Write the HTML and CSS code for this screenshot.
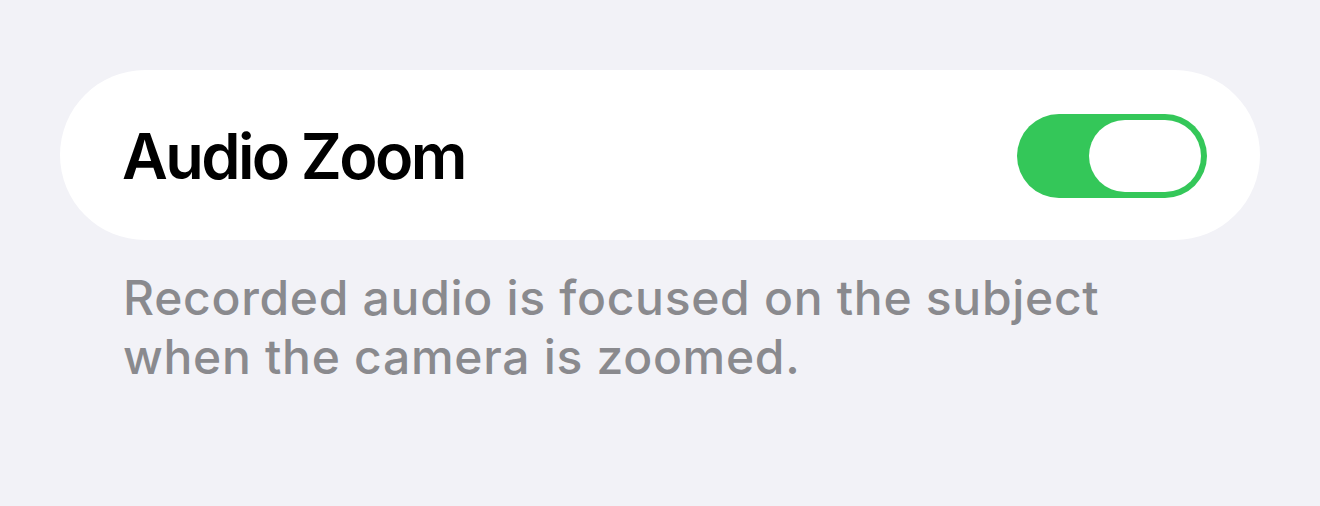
FILE: index.html
```html
<!DOCTYPE html>
<html lang="en">
<head>
  <meta charset="UTF-8">
  <meta name="viewport" content="width=device-width, initial-scale=1">
  <title>Audio Zoom</title>
  <link rel="stylesheet" href="styles.css">
</head>
<body>

<div class="group">
  <!-- setting row -->
  <div class="cell">
    <span class="cell-title">Audio Zoom</span>
    <div class="switch on">
      <div class="knob"></div>
    </div>
  </div>
  <!-- footer note under the group -->
  <p class="footer">Recorded audio is focused on the subject<br>when the camera is zoomed.</p>
</div>

</body>
</html>
```

FILE: styles.css
```css
body {
  margin: 0;
  background: #f2f2f7;
  font-family: Inter, "Noto Sans", sans-serif;
  padding: 70px 60px 0;
}
.group {
  width: 1200px;
}
.cell {
  background: #fff;
  border-radius: 85px;
  height: 170px;
  display: flex;
  align-items: center;
  justify-content: space-between;
  padding: 0 53px 0 62px;
  box-sizing: border-box;
}
.cell-title {
  font-size: 63px;
  font-weight: 600;
  color: #000;
  letter-spacing: -2.6px;
  margin-top: 1px;
}
.switch {
  width: 190px;
  height: 84px;
  border-radius: 42px;
  background: #34c759;
  display: flex;
  align-items: center;
  justify-content: flex-end;
  padding: 0 6px;
  box-sizing: border-box;
  margin-top: 2px;
}
.knob {
  width: 112px;
  height: 72px;
  border-radius: 36px;
  background: #fff;
}
.footer {
  margin: 28px 0 0 63px;
  font-size: 48px;
  line-height: 59px;
  font-weight: 500;
  color: #8a8a8e;
  letter-spacing: 0.7px;
}
```
